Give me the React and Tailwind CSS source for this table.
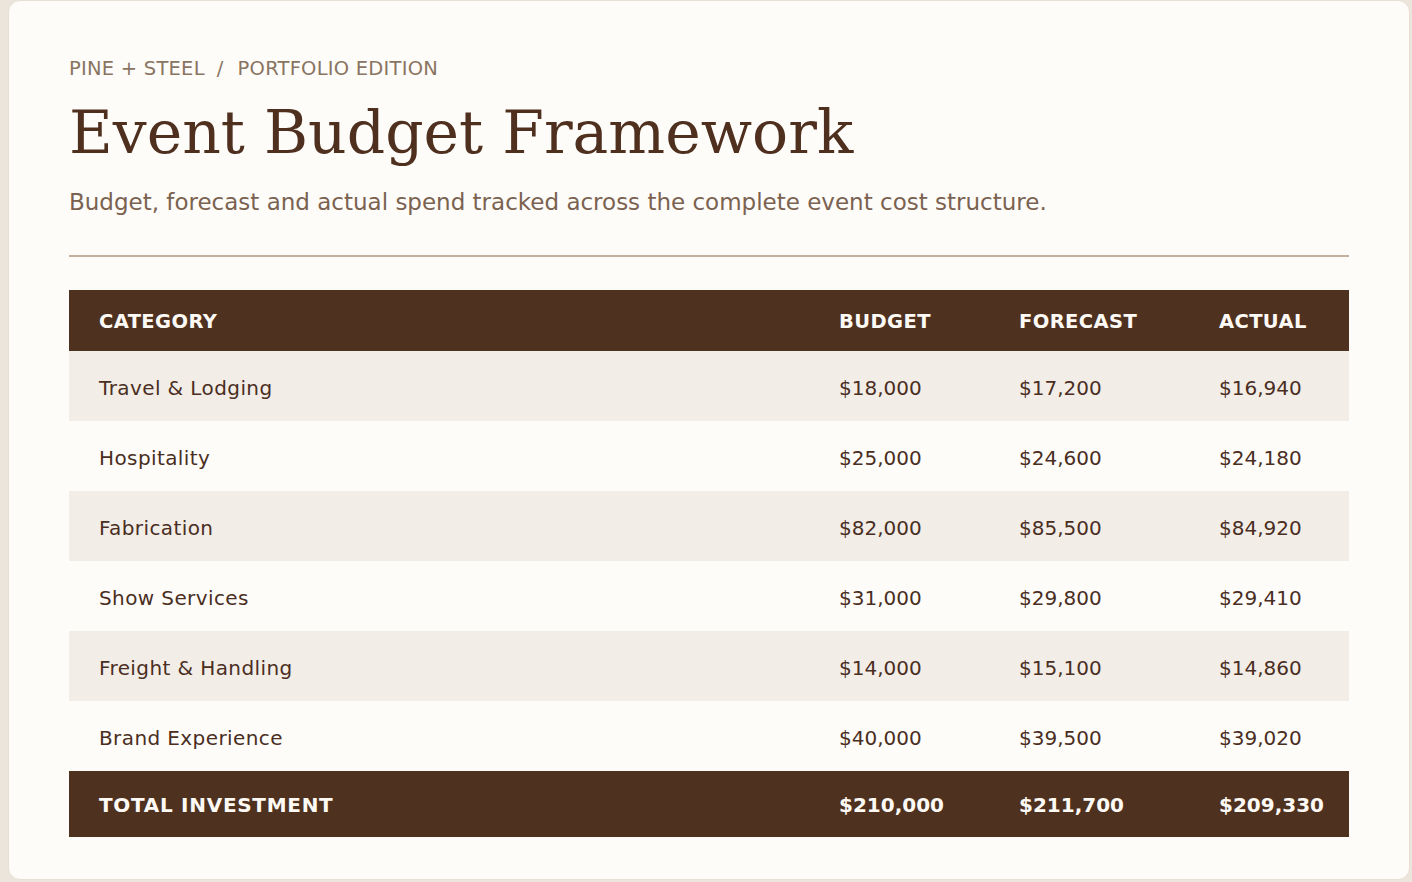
import React from "react";

const rows = [
  ["Travel & Lodging", "$18,000", "$17,200", "$16,940"],
  ["Hospitality", "$25,000", "$24,600", "$24,180"],
  ["Fabrication", "$82,000", "$85,500", "$84,920"],
  ["Show Services", "$31,000", "$29,800", "$29,410"],
  ["Freight & Handling", "$14,000", "$15,100", "$14,860"],
  ["Brand Experience", "$40,000", "$39,500", "$39,020"],
];

const sans = { fontFamily: '"DejaVu Sans", Verdana, sans-serif' };

export default function App() {
  return (
    <div className="min-h-screen bg-[#ebe5dc] pl-2 pr-[2px] pb-[2px]" style={sans}>
      <div className="h-[880px] rounded-xl border border-[#e6dfd4] bg-[#fdfcf9] px-[60px] pt-[54px]">
        <div className="text-[19.5px] leading-[28px] tracking-[0.012em] text-[#8a7462]">
          PINE + STEEL<span className="ml-[12px] mr-[14px]">/</span>PORTFOLIO EDITION
        </div>
        <h1
          className="mt-[13px] text-[60px] leading-[72px] text-[#4f301f]"
          style={{ fontFamily: '"DejaVu Serif", Georgia, serif' }}
        >
          Event Budget Framework
        </h1>
        <p className="mt-[17px] text-[23px] leading-[34px] text-[#7b6250]">
          Budget, forecast and actual spend tracked across the complete event cost structure.
        </p>
        <div className="mt-[36px] h-[2px] bg-[#c4b09e]" />
        <div className="mt-[33px]">
          <div className="grid h-[61px] grid-cols-[740px_180px_200px_1fr] items-center bg-[#4f3120] pt-[3px] text-[19.5px] font-bold tracking-[0.02em] text-[#fdfaf5]">
            <div className="pl-[30px]">CATEGORY</div>
            <div className="pl-[30px]">BUDGET</div>
            <div className="pl-[30px]">FORECAST</div>
            <div className="pl-[30px]">ACTUAL</div>
          </div>
          {rows.map((r, i) => (
            <div
              key={r[0]}
              className={
                "grid h-[70px] grid-cols-[740px_180px_200px_1fr] items-center pt-[3px] text-[20px] text-[#4a2e1f] " +
                (i % 2 === 0 ? "bg-[#f2ede7]" : "bg-[#fdfcf9]")
              }
            >
              <div className="pl-[30px] tracking-[0.02em]">{r[0]}</div>
              <div className="pl-[30px]">{r[1]}</div>
              <div className="pl-[30px]">{r[2]}</div>
              <div className="pl-[30px]">{r[3]}</div>
            </div>
          ))}
          <div className="grid h-[66px] grid-cols-[740px_180px_200px_1fr] items-center bg-[#4f3120] pt-[2px] text-[20px] font-bold text-[#fdfaf5]">
            <div className="pl-[30px] tracking-[0.035em]">TOTAL INVESTMENT</div>
            <div className="pl-[30px]">$210,000</div>
            <div className="pl-[30px]">$211,700</div>
            <div className="pl-[30px]">$209,330</div>
          </div>
        </div>
      </div>
    </div>
  );
}
